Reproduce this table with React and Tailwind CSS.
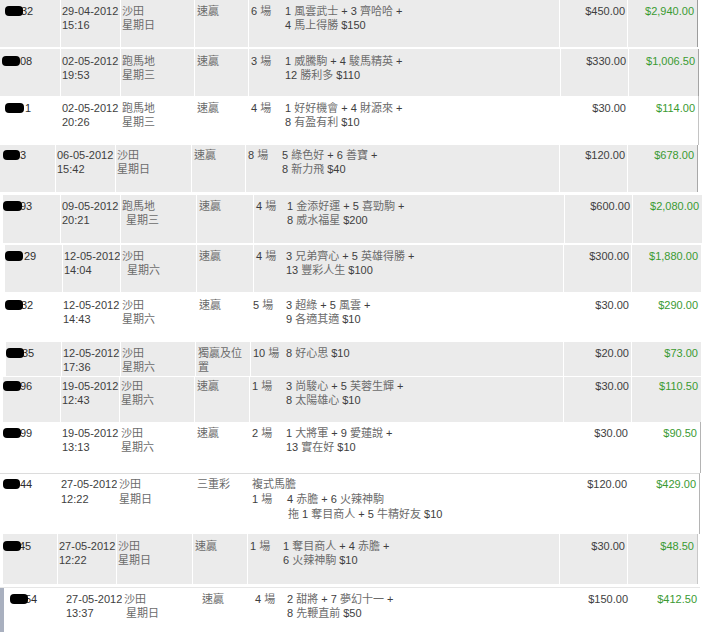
import React from "react";

const CJK = /[\u3400-\u9fff]/;

function T({ s }) {
  const parts = s.split(/([\u3400-\u9fff]+)/);
  return (
    <>
      {parts.map((p, i) =>
        CJK.test(p) ? (
          <span key={i} className="text-[#6b6b6b]">{p}</span>
        ) : (
          <span key={i}>{p}</span>
        )
      )}
    </>
  );
}

const G = "bg-[#ebebeb]";
const W = "bg-white";

const rows = [
  {
    box: `h-[47px] mb-[2px] w-[698px] ${G} border-r border-r-[#9c9c9c]`,
    id: "w-[60px]", date: "w-[60px]", venue: "w-[74px]", type: "w-[54px]", sub: "w-[34px]", pt: "pt-[4px]",
    blob: "left-[5px] w-[18px]", dig: "ml-[21px]", num: "32",
    d: "29-04-2012", t: "15:16", v: "沙田", day: "星期日", ty: "速贏", race: "6 場",
    bet: ["1 風雲武士 + 3 齊哈哈 +", "4 馬上得勝 $150"], amt: "$450.00", pay: "$2,940.00",
  },
  {
    box: `h-[47px] w-[699px] ${G} border-r border-r-[#a4a4a4]`,
    id: "w-[60px]", date: "w-[60px]", venue: "w-[74px]", type: "w-[54px]", sub: "w-[34px]", pt: "pt-[5px]",
    blob: "left-[2px] w-[18px]", dig: "ml-[20px]", num: "08",
    d: "02-05-2012", t: "19:53", v: "跑馬地", day: "星期三", ty: "速贏", race: "3 場",
    bet: ["1 威騰駒 + 4 駿馬精英 +", "12 勝利多 $110"], amt: "$330.00", pay: "$1,006.50",
  },
  {
    box: `h-[49px] w-[699px] ${W} border-r border-r-[#c4c4c4]`,
    id: "w-[60px]", date: "w-[60px]", venue: "w-[74px]", type: "w-[54px]", sub: "w-[34px]", pt: "pt-[5px]",
    blob: "left-[5px] w-[19px]", dig: "ml-[25px]", num: "1",
    d: "02-05-2012", t: "20:26", v: "跑馬地", day: "星期三", ty: "速贏", race: "4 場",
    bet: ["1 好好機會 + 4 財源來 +", "8 有盈有利 $10"], amt: "$30.00", pay: "$114.00",
  },
  {
    box: `h-[47px] mb-[3px] w-[698px] ${G} border-r border-r-[#a8a8a8]`,
    id: "w-[55px]", date: "w-[60px]", venue: "w-[76px]", type: "w-[54px]", sub: "w-[34px]", pt: "pt-[3px]",
    blob: "left-[3px] w-[17px]", dig: "ml-[20px]", num: "3",
    d: "06-05-2012", t: "15:42", v: "沙田", day: "星期日", ty: "速贏", race: "8 場",
    bet: ["5 綠色好 + 6 善寶 +", "8 新力飛 $40"], amt: "$120.00", pay: "$678.00",
  },
  {
    box: `h-[48px] mb-[2px] w-[702px] ${G}`,
    idb: "border-l-[3px] border-l-white",
    id: "w-[60px]", date: "w-[60px]", venue: "w-[76px]", type: "w-[57px]", sub: "w-[31px]", pt: "pt-[4px]",
    blob: "left-[0px] w-[19px]", dig: "ml-[17px]", num: "93", dayPad: "pl-[4px]",
    d: "09-05-2012", t: "20:21", v: "跑馬地", day: "星期三", ty: "速贏", race: "4 場",
    bet: ["1 金添好運 + 5 喜勁駒 +", "8 威水福星 $200"], amt: "$600.00", pay: "$2,080.00",
  },
  {
    box: `h-[47px] w-[701px] ${G}`,
    idb: "border-l-[5px] border-l-white",
    id: "w-[62px]", date: "w-[58px]", venue: "w-[76px]", type: "w-[57px]", sub: "w-[30px]", pt: "pt-[4px]",
    blob: "left-[0px] w-[18px]", dig: "ml-[19px]", num: "29", dayPad: "pl-[5px]",
    d: "12-05-2012", t: "14:04", v: "沙田", day: "星期六", ty: "速贏", race: "4 場",
    bet: ["3 兄弟齊心 + 5 英雄得勝 +", "13 豐彩人生 $100"], amt: "$300.00", pay: "$1,880.00",
  },
  {
    box: `h-[50px] w-[701px] ${W}`,
    id: "w-[61px]", date: "w-[59px]", venue: "w-[76px]", type: "w-[54px]", sub: "w-[33px]", pt: "pt-[6px]",
    blob: "left-[5px] w-[18px]", dig: "ml-[21px]", num: "32",
    d: "12-05-2012", t: "14:43", v: "沙田", day: "星期六", ty: "速贏", race: "5 場",
    bet: ["3 超綠 + 5 風雲 +", "9 各適其適 $10"], amt: "$30.00", pay: "$290.00",
  },
  {
    box: `h-[34px] mb-[1px] w-[701px] ${G}`,
    idb: "border-l-[6px] border-l-white",
    id: "w-[61px]", date: "w-[59px]", venue: "w-[75px]", type: "w-[55px]", sub: "w-[33px]", pt: "pt-[4px]",
    blob: "left-[0px] w-[18px]", dig: "ml-[16px]", num: "35",
    d: "12-05-2012", t: "17:36", v: "沙田", day: "星期六", ty: "獨贏及位置", race: "10 場",
    bet: ["8 好心思 $10"], amt: "$20.00", pay: "$73.00",
  },
  {
    box: `h-[45px] w-[701px] ${G}`,
    idb: "border-l-[3px] border-l-white",
    id: "w-[60px]", date: "w-[59px]", venue: "w-[75px]", type: "w-[55px]", sub: "w-[34px]", pt: "pt-[2px]",
    blob: "left-[0px] w-[18px]", dig: "ml-[17px]", num: "96",
    d: "19-05-2012", t: "12:43", v: "沙田", day: "星期六", ty: "速贏", race: "1 場",
    bet: ["3 尚駿心 + 5 芙蓉生輝 +", "8 太陽雄心 $10"], amt: "$30.00", pay: "$110.50",
  },
  {
    box: `h-[51px] w-[701px] ${W} border-r border-r-[#b4b4b4]`,
    id: "w-[60px]", date: "w-[59px]", venue: "w-[75px]", type: "w-[55px]", sub: "w-[34px]", pt: "pt-[4px]",
    blob: "left-[3px] w-[18px]", dig: "ml-[20px]", num: "99",
    d: "19-05-2012", t: "13:13", v: "沙田", day: "星期六", ty: "速贏", race: "2 場",
    bet: ["1 大將軍 + 9 愛蓮說 +", "13 實在好 $10"], amt: "$30.00", pay: "$90.50",
  },
  {
    box: `h-[61px] w-[700px] ${W} border-t border-t-[#dcdcdc] border-r border-r-[#b4b4b4]`,
    id: "w-[59px]", date: "w-[58px]", venue: "w-[77px]", type: "w-[55px]", sub: "w-[35px]", pt: "pt-[3px]",
    lead: "leading-[15px]",
    blob: "left-[3px] w-[17px]", dig: "ml-[20px]", num: "44",
    d: "27-05-2012", t: "12:22", v: "沙田", day: "星期日", ty: "三重彩", race: "1 場",
    top: "複式馬膽",
    bet: ["4 赤膽 + 6 火辣神駒", "拖 1 奪目商人 + 5 牛精好友 $10"], amt: "$120.00", pay: "$429.00",
  },
  {
    box: `h-[50px] mb-[3px] w-[698px] ${G} border-r border-r-[#c8c8c8]`,
    idb: "border-l-[3px] border-l-white",
    id: "w-[57px]", date: "w-[59px]", venue: "w-[76px]", type: "w-[55px]", sub: "w-[33px]", pt: "pt-[5px]",
    blob: "left-[0px] w-[18px]", dig: "ml-[16px]", num: "45",
    d: "27-05-2012", t: "12:22", v: "沙田", day: "星期日", ty: "速贏", race: "1 場",
    bet: ["1 奪目商人 + 4 赤膽 +", "6 火辣神駒 $10"], amt: "$30.00", pay: "$48.50",
  },
  {
    box: `h-[45px] w-[700px] ${W} border-t border-t-[#e6e6e6]`,
    idb: "border-l-[4px] border-l-[#a9b0bf]",
    id: "w-[64px]", date: "w-[58px]", venue: "w-[77px]", type: "w-[53px]", sub: "w-[32px]", pt: "pt-[4px]",
    blob: "left-[6px] w-[18px]", dig: "ml-[21px]", num: "54", dayPad: "pl-[2px]",
    d: "27-05-2012", t: "13:37", v: "沙田", day: "星期日", ty: "速贏", race: "4 場",
    bet: ["2 甜將 + 7 夢幻十一 +", "8 先鞭直前 $50"], amt: "$150.00", pay: "$412.50",
  },
];

function Row({ r }) {
  const lead = r.lead || "leading-[14px]";
  return (
    <div className={`flex shrink-0 ${lead} ${r.box}`}>
      <div className={`shrink-0 ${r.id} ${r.idb || ""} ${r.pt}`}>
        <div className="relative">
          <span className={`block text-[#2e2e2e] ${r.dig}`}>{r.num}</span>
          <span className={`absolute top-[2px] h-[10px] rounded-[4px] bg-black ${r.blob}`} />
        </div>
      </div>
      <div className={`shrink-0 whitespace-nowrap border-l border-white pl-[1px] ${r.date} ${r.pt}`}>
        <div>{r.d}</div>
        <div>{r.t}</div>
      </div>
      <div className={`shrink-0 whitespace-nowrap border-l border-white pl-[1px] ${r.venue} ${r.pt}`}>
        <div><T s={r.v} /></div>
        <div className={r.dayPad || ""}><T s={r.day} /></div>
      </div>
      <div className={`shrink-0 border-l border-white pl-[2px] ${r.type} ${r.pt}`}>
        <T s={r.ty} />
      </div>
      <div className={`min-w-0 flex-1 border-l border-white pl-[2px] ${r.pt}`}>
        {r.top && (
          <div>
            <T s={r.top} />
          </div>
        )}
        <div className="flex">
          <div className={`shrink-0 whitespace-nowrap ${r.sub}`}>
            <T s={r.race} />
          </div>
          <div className="whitespace-nowrap">
            {r.bet.map((b, i) => (
              <div key={i} className={r.top && i === 1 ? "pl-[1px]" : ""}>
                <T s={b} />
              </div>
            ))}
          </div>
        </div>
      </div>
      <div className={`w-[68px] shrink-0 border-l border-white pr-[2px] text-right ${r.pt}`}>
        {r.amt}
      </div>
      <div className={`w-[70px] shrink-0 border-l border-white pr-[3px] text-right text-[#3a9a32] ${r.pt}`}>
        {r.pay}
      </div>
    </div>
  );
}

export default function App() {
  return (
    <div className="flex h-[632px] w-[705px] flex-col overflow-hidden bg-white font-['Liberation_Sans','Noto_Sans_CJK_TC',sans-serif] text-[11px] text-[#3e3e3e]">
      {rows.map((r, i) => (
        <Row key={i} r={r} />
      ))}
    </div>
  );
}
